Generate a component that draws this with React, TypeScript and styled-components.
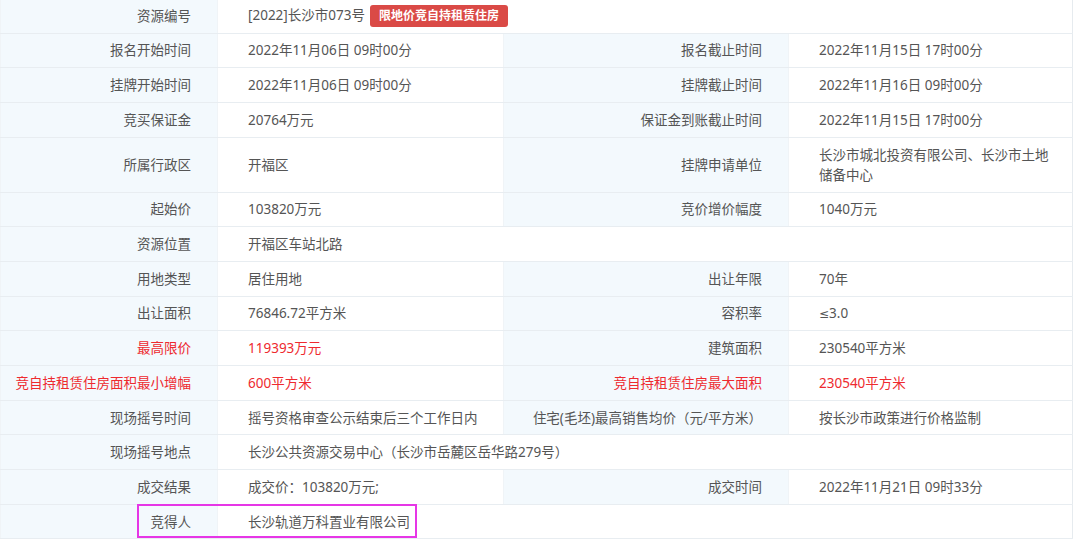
import React from 'react';
import styled, { createGlobalStyle } from 'styled-components';

const GlobalStyle = createGlobalStyle`
  html, body {
    margin: 0;
    padding: 0;
    background: #ffffff;
  }
  body {
    font-family: "Noto Sans", "Noto Sans CJK SC", sans-serif;
    font-size: 13.5px;
    color: #555;
  }
`;

const Wrapper = styled.div`
  position: relative;
  width: 1072px;
`;

const Table = styled.table`
  width: 1072px;
  border-collapse: collapse;
  table-layout: fixed;
  border-right: 1px solid #e6ebef;
`;

const Row = styled.tr<{ $h?: number }>`
  height: ${(p) => p.$h ?? 34.7}px;
`;

const Label = styled.td<{ $red?: boolean }>`
  background: #f3f9fd;
  text-align: right;
  padding: 0 26px 0 4px;
  color: ${(p) => (p.$red ? '#ee2a2f' : '#555')};
  border-bottom: 1px solid #e8edf1;
  border-left: 1px solid #f0f4f7;
  white-space: nowrap;
  line-height: 20px;
`;

const Value = styled.td<{ $red?: boolean }>`
  background: #ffffff;
  text-align: left;
  padding: 0 18px 0 30px;
  color: ${(p) => (p.$red ? '#ee2a2f' : '#555')};
  border-bottom: 1px solid #e8edf1;
  border-left: 1px solid #f0f4f7;
  line-height: 20px;
`;

const Symbol = styled.span`
  font-family: "DejaVu Sans", sans-serif;
  font-size: 12px;
`;

const Badge = styled.span`
  display: inline-block;
  margin-left: 5px;
  padding: 0 9px;
  height: 22px;
  line-height: 22px;
  border-radius: 3px;
  background: #da4a46;
  color: #fff;
  font-size: 12px;
  font-weight: bold;
  vertical-align: middle;
`;

const Highlight = styled.div`
  position: absolute;
  left: 137px;
  top: 504px;
  width: 276px;
  height: 30px;
  border: 2px solid #e636e6;
  pointer-events: none;
`;

type Cell = { text: React.ReactNode; red?: boolean };
type RowData = { cells: [Cell, Cell] | [Cell, Cell, Cell, Cell]; h?: number };

const rows: RowData[] = [
  {
    h: 33,
    cells: [
      { text: '资源编号' },
      {
        text: (
          <>
            [2022]长沙市073号<Badge>限地价竞自持租赁住房</Badge>
          </>
        ),
      },
    ],
  },
  { cells: [{ text: '报名开始时间' }, { text: '2022年11月06日 09时00分' }, { text: '报名截止时间' }, { text: '2022年11月15日 17时00分' }] },
  { cells: [{ text: '挂牌开始时间' }, { text: '2022年11月06日 09时00分' }, { text: '挂牌截止时间' }, { text: '2022年11月16日 09时00分' }] },
  { cells: [{ text: '竞买保证金' }, { text: '20764万元' }, { text: '保证金到账截止时间' }, { text: '2022年11月15日 17时00分' }] },
  {
    h: 55,
    cells: [{ text: '所属行政区' }, { text: '开福区' }, { text: '挂牌申请单位' }, { text: '长沙市城北投资有限公司、长沙市土地储备中心' }],
  },
  { cells: [{ text: '起始价' }, { text: '103820万元' }, { text: '竞价增价幅度' }, { text: '1040万元' }] },
  { cells: [{ text: '资源位置' }, { text: '开福区车站北路' }] },
  { cells: [{ text: '用地类型' }, { text: '居住用地' }, { text: '出让年限' }, { text: '70年' }] },
  {
    cells: [
      { text: '出让面积' },
      { text: '76846.72平方米' },
      { text: '容积率' },
      {
        text: (
          <>
            <Symbol>≤</Symbol>3.0
          </>
        ),
      },
    ],
  },
  { cells: [{ text: '最高限价', red: true }, { text: '119393万元', red: true }, { text: '建筑面积' }, { text: '230540平方米' }] },
  {
    cells: [
      { text: '竞自持租赁住房面积最小增幅', red: true },
      { text: '600平方米', red: true },
      { text: '竞自持租赁住房最大面积', red: true },
      { text: '230540平方米', red: true },
    ],
  },
  {
    cells: [
      { text: '现场摇号时间' },
      { text: '摇号资格审查公示结束后三个工作日内' },
      { text: '住宅(毛坯)最高销售均价（元/平方米）' },
      { text: '按长沙市政策进行价格监制' },
    ],
  },
  { cells: [{ text: '现场摇号地点' }, { text: '长沙公共资源交易中心（长沙市岳麓区岳华路279号）' }] },
  { cells: [{ text: '成交结果' }, { text: '成交价：103820万元;' }, { text: '成交时间' }, { text: '2022年11月21日 09时33分' }] },
  { cells: [{ text: '竞得人' }, { text: '长沙轨道万科置业有限公司' }] },
];

const App: React.FC = () => {
  return (
    <>
      <GlobalStyle />
      <Wrapper>
        <Table>
          <colgroup>
            <col style={{ width: 217 }} />
            <col style={{ width: 286 }} />
            <col style={{ width: 285 }} />
            <col style={{ width: 284 }} />
          </colgroup>
          <tbody>
            {rows.map((r, i) => (
              <Row key={i} $h={r.h}>
                {r.cells.length === 2 ? (
                  <>
                    <Label $red={r.cells[0].red}>{r.cells[0].text}</Label>
                    <Value $red={r.cells[1].red} colSpan={3}>
                      {r.cells[1].text}
                    </Value>
                  </>
                ) : (
                  r.cells.map((c, j) =>
                    j % 2 === 0 ? (
                      <Label key={j} $red={c.red}>
                        {c.text}
                      </Label>
                    ) : (
                      <Value key={j} $red={c.red}>
                        {c.text}
                      </Value>
                    )
                  )
                )}
              </Row>
            ))}
          </tbody>
        </Table>
        <Highlight />
      </Wrapper>
    </>
  );
};

export default App;
